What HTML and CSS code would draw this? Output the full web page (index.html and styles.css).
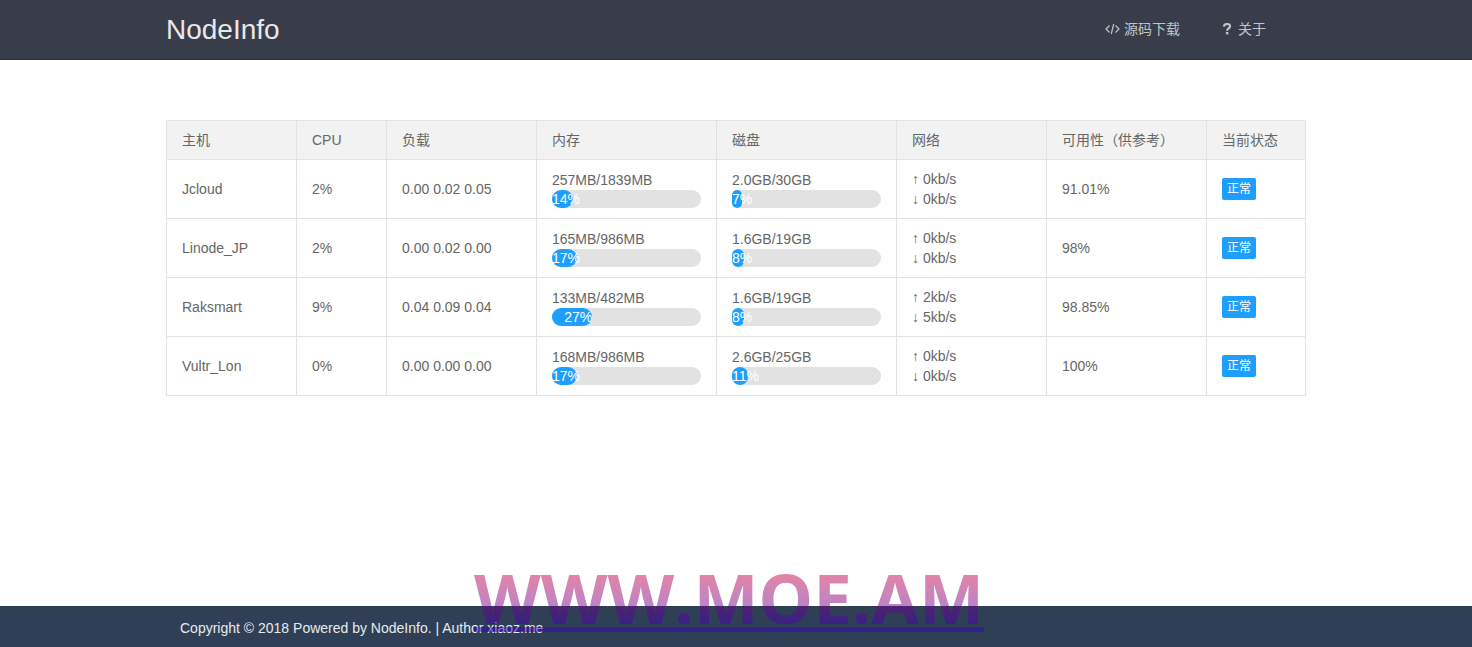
FILE: index.html
```html
<!DOCTYPE html>
<html lang="zh-CN">
<head>
<meta charset="utf-8">
<title>NodeInfo</title>
<link rel="stylesheet" href="styles.css">
</head>
<body>
<header class="header">
  <div class="container header-inner">
    <h1 class="logo">NodeInfo</h1>
    <nav class="nav">
      <a class="nav-link" href="#"><svg class="icon" width="15" height="12" viewBox="0 0 15 12" aria-hidden="true"><path d="M4.500 2.500 1 6l3.500 3.500M10.500 2.500 14 6l-3.500 3.500M8.700 1 6.300 11" fill="none" stroke="currentColor" stroke-width="1.200"/></svg>源码下载</a>
      <a class="nav-link" href="#"><svg class="icon" width="12" height="12" viewBox="0 0 12 12" aria-hidden="true"><path d="M1.800 3.600C2.100 1.700 3.300 1 4.900 1c1.800 0 3.100.9 3.100 2.400 0 2-2.900 2.100-2.900 4.300" fill="none" stroke="currentColor" stroke-width="2.200"/><path d="M3.900 9h2.500v2.400H3.900z" fill="currentColor"/></svg>关于</a>
    </nav>
  </div>
</header>
<main class="container main">
  <table class="nodes">
    <colgroup><col class="c-host"><col class="c-cpu"><col class="c-load"><col class="c-usage"><col class="c-usage"><col class="c-net"><col class="c-uptime"><col></colgroup>
    <thead>
      <tr><th>主机</th><th>CPU</th><th>负载</th><th>内存</th><th>磁盘</th><th>网络</th><th>可用性（供参考）</th><th>当前状态</th></tr>
    </thead>
    <tbody>
      <tr>
        <td>Jcloud</td><td>2%</td><td>0.00 0.02 0.05</td>
        <td>257MB/1839MB<div class="progress"><div class="bar" style="width:14%">14%</div></div></td>
        <td>2.0GB/30GB<div class="progress"><div class="bar" style="width:7%">7%</div></div></td>
        <td>↑ 0kb/s<br>↓ 0kb/s</td><td>91.01%</td><td><button class="status" type="button">正常</button></td>
      </tr>
      <tr>
        <td>Linode_JP</td><td>2%</td><td>0.00 0.02 0.00</td>
        <td>165MB/986MB<div class="progress"><div class="bar" style="width:17%">17%</div></div></td>
        <td>1.6GB/19GB<div class="progress"><div class="bar" style="width:8%">8%</div></div></td>
        <td>↑ 0kb/s<br>↓ 0kb/s</td><td>98%</td><td><button class="status" type="button">正常</button></td>
      </tr>
      <tr>
        <td>Raksmart</td><td>9%</td><td>0.04 0.09 0.04</td>
        <td>133MB/482MB<div class="progress"><div class="bar" style="width:27%">27%</div></div></td>
        <td>1.6GB/19GB<div class="progress"><div class="bar" style="width:8%">8%</div></div></td>
        <td>↑ 2kb/s<br>↓ 5kb/s</td><td>98.85%</td><td><button class="status" type="button">正常</button></td>
      </tr>
      <tr>
        <td>Vultr_Lon</td><td>0%</td><td>0.00 0.00 0.00</td>
        <td>168MB/986MB<div class="progress"><div class="bar" style="width:17%">17%</div></div></td>
        <td>2.6GB/25GB<div class="progress"><div class="bar" style="width:11%">11%</div></div></td>
        <td>↑ 0kb/s<br>↓ 0kb/s</td><td>100%</td><td><button class="status" type="button">正常</button></td>
      </tr>
    </tbody>
  </table>
</main>
<footer class="footer">
  <div class="container copyright">Copyright © 2018 Powered by NodeInfo. | Author <a href="#">xiaoz.me</a></div>
</footer>
<div class="watermark"><span class="watermark-text">WWW.MOE.AM</span></div>
</body>
</html>
```
FILE: styles.css
```css
* {
  box-sizing: border-box;
}

body {
  position: relative;
  display: flex;
  flex-direction: column;
  min-height: 100vh;
  margin: 0;
  background: #fff;
  color: #666;
  font: 14px/20px "Liberation Sans", "Noto Sans CJK SC", sans-serif;
}

a {
  color: inherit;
  text-decoration: none;
}

.container {
  width: 100%;
  max-width: 1140px;
  margin: 0 auto;
}

.header {
  background: #393d49;
  border-bottom: 1px solid #2b2e38;
}

.header-inner {
  display: flex;
  justify-content: space-between;
  height: 59px;
}

.logo {
  margin: 0;
  color: #e8e8ea;
  font-size: 28px;
  font-weight: 400;
  line-height: 60px;
}

.nav {
  display: flex;
  gap: 2px;
  padding: 0 20px;
}

.nav-link {
  display: flex;
  align-items: center;
  gap: 4px;
  height: 57px;
  padding: 0 20px;
  color: #c2c4c8;
}

.main {
  flex: 1;
  padding: 60px 0;
}

.nodes {
  width: 100%;
  table-layout: fixed;
  border-collapse: collapse;
}

.c-host { width: 130px; }
.c-cpu { width: 90px; }
.c-load, .c-net { width: 150px; }
.c-usage { width: 180px; }
.c-uptime { width: 160px; }

.nodes th,
.nodes td {
  padding: 9px 15px;
  border: 1px solid #e2e2e2;
  text-align: left;
  vertical-align: middle;
  font-weight: 400;
}

.nodes th {
  background: #f2f2f2;
  white-space: nowrap;
}

.progress {
  height: 18px;
  border-radius: 9px;
  background: #e2e2e2;
}

.bar {
  height: 18px;
  border-radius: 9px;
  background: #1e9fff;
  color: #fff;
  line-height: 18px;
  text-align: right;
  white-space: nowrap;
}

.status {
  display: block;
  height: 22px;
  padding: 0 5px;
  border: 0;
  border-radius: 2px;
  background: #1e9fff;
  color: #fff;
  font: 12px/22px "Liberation Sans", "Noto Sans CJK SC", sans-serif;
}

.footer {
  background: #2f4056;
  color: #e8eaec;
}

.copyright {
  padding: 12px 14px 9px;
}

.watermark {
  position: absolute;
  right: 0;
  bottom: 15px;
  left: 0;
  display: flex;
  justify-content: center;
  padding-right: 14px;
  opacity: 0.48;
  pointer-events: none;
}

.watermark-text {
  padding-bottom: 3px;
  border-bottom: 5px solid #3200c8;
  background: linear-gradient(#d2003c, #3c00be);
  background-clip: text;
  -webkit-background-clip: text;
  color: transparent;
  font: 700 69px/54px "Noto Sans", "Open Sans", sans-serif;
  font-kerning: none;
}
```
